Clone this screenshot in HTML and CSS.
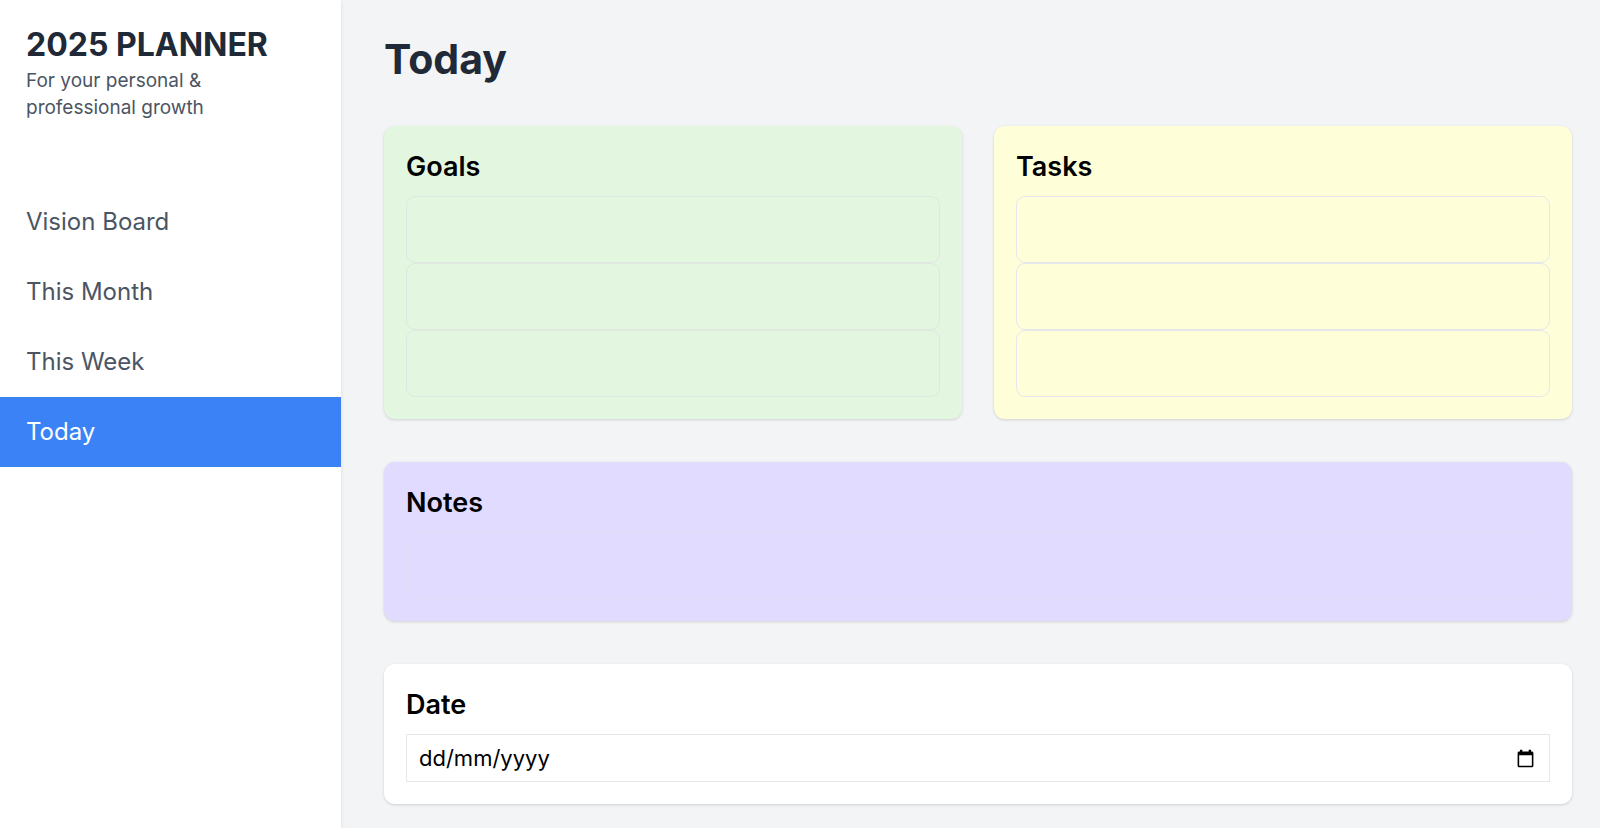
FILE: index.html
```
<!DOCTYPE html>
<html lang="en">
<head>
	<meta charset="utf-8">
	<meta name="viewport" content="width=device-width, initial-scale=1">
	<title>2025 Planner</title>
	<link rel="stylesheet" href="styles.css">
</head>
<body>
	<aside class="sidebar">
		<div class="brand">
			<h1>2025 PLANNER</h1>
			<p>For your personal &amp; professional growth</p>
		</div>
		<nav>
			<a href="#vision">Vision Board</a>
			<a href="#month">This Month</a>
			<a href="#week">This Week</a>
			<a href="#today" class="active">Today</a>
		</nav>
	</aside>

	<main>
		<h2>Today</h2>
		<div class="row">
			<section class="card goals">
				<h3>Goals</h3>
				<textarea aria-label="Goal 1"></textarea>
				<textarea aria-label="Goal 2"></textarea>
				<textarea aria-label="Goal 3"></textarea>
			</section>
			<section class="card tasks">
				<h3>Tasks</h3>
				<textarea aria-label="Task 1"></textarea>
				<textarea aria-label="Task 2"></textarea>
				<textarea aria-label="Task 3"></textarea>
			</section>
		</div>

		<section class="card notes">
			<h3>Notes</h3>
			<textarea aria-label="Notes"></textarea>
		</section>

		<section class="card date">
			<h3><label for="date">Date</label></h3>
			<div class="date-field">
				<input type="text" id="date" placeholder="dd/mm/yyyy">
				<button type="button" aria-label="Show date picker">
					<svg viewBox="0 0 24 24" width="19" height="19"><path d="M20 3h-1V1h-3v2H8V1H5v2H4c-1.100 0-2 .9-2 2v16c0 1.100.9 2 2 2h16c1.100 0 2-.9 2-2V5c0-1.100-.9-2-2-2zm0 18H4V8h16v13z"/></svg>
				</button>
			</div>
		</section>
	</main>
</body>
</html>
```
FILE: styles.css
```
*{
	margin: 0;
	padding: 0;
	box-sizing: border-box;
}
body{
	display: flex;
	min-height: 100vh;
	background: #f3f4f6;
	color: #000;
	font-family: Inter, "Liberation Sans", sans-serif;
}
.sidebar{
	flex: none;
	width: 341px;
	background: #fff;
	box-shadow: 0 1px 4px rgba(0, 0, 0, .1);
}
.brand{
	padding: 23px 26px 66px;
}
.brand h1{
	color: #1f2937;
	font-size: 32px;
	line-height: 44px;
}
.brand p{
	max-width: 240px;
	color: #4b5563;
	font-size: 19px;
	line-height: 27px;
}
nav a{
	display: block;
	padding: 16px 26px;
	color: #4b5563;
	font-size: 24px;
	line-height: 38px;
	text-decoration: none;
}
nav a.active{
	background: #3b82f6;
	color: #fff;
}
main{
	flex: 1;
	display: flex;
	flex-direction: column;
	gap: 43px;
	padding: 35px 28px 25px 43px;
}
h2{
	color: #1f2937;
	font-size: 41px;
	line-height: 48px;
}
.row{
	display: grid;
	grid-template-columns: 1fr 1fr;
	gap: 32px;
}
.card{
	padding: 22px;
	border-radius: 11px;
	box-shadow: 0 1px 3px rgba(0, 0, 0, .15);
}
h3{
	margin-bottom: 10px;
	font-size: 27px;
	font-weight: 600;
	line-height: 38px;
}
.goals{
	background: #e3f6df;
}
.tasks{
	background: #feffd9;
}
.notes{
	background: #e0dbff;
}
.date{
	background: #fff;
}
textarea{
	display: block;
	width: 100%;
	height: 67px;
	padding: 10px;
	border: 1px solid #e5e7eb;
	border-radius: 9px;
	background: transparent;
	font: inherit;
	font-size: 22px;
	resize: none;
}
.goals textarea{
	border-color: #dfe8e0;
}
.notes textarea{
	border-color: #e3ddf8;
}
.date-field{
	display: flex;
	align-items: center;
	height: 48px;
	padding: 0 14px 0 12px;
	border: 1px solid #e5e7eb;
}
.date-field input{
	flex: 1;
	min-width: 0;
	border: 0;
	outline: 0;
	background: transparent;
	font: inherit;
	font-size: 22px;
}
.date-field input::placeholder{
	color: #000;
	opacity: 1;
}
.date-field button{
	display: flex;
	border: 0;
	background: none;
	cursor: pointer;
}
```
